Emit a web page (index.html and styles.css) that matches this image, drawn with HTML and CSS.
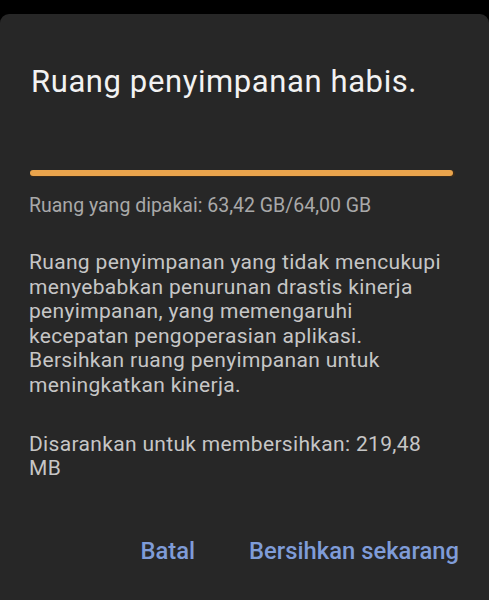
FILE: index.html
```html
<!DOCTYPE html>
<html lang="id">
<head>
<meta charset="utf-8">
<link rel="stylesheet" href="styles.css">
</head>
<body>
<div class="dialog">
  <h1 class="title">Ruang penyimpanan habis.</h1>
  <div class="bar"><div class="fill" style="width: 99.5%"></div></div>
  <p class="usage">Ruang yang dipakai: 63,42 GB/64,00 GB</p>
  <p class="desc">Ruang penyimpanan yang tidak mencukupi menyebabkan penurunan drastis kinerja penyimpanan, yang memengaruhi kecepatan pengoperasian aplikasi. Bersihkan ruang penyimpanan untuk meningkatkan kinerja.</p>
  <p class="desc suggest">Disarankan untuk membersihkan: 219,48 MB</p>
  <div class="actions">
    <span class="btn">Batal</span>
    <span class="btn">Bersihkan sekarang</span>
  </div>
</div>
</body>
</html>
```
FILE: styles.css
```css
html, body {
  margin: 0;
  padding: 0;
  background: #000;
  height: 600px;
  overflow: hidden;
}
.dialog {
  margin-top: 14px;
  background: #272727;
  border-radius: 9px 9px 0 0;
  padding: 50px 31px 0 29px;
  height: 600px;
  box-sizing: border-box;
  font-family: Roboto, "Noto Sans", sans-serif;
}
.title {
  margin: 0 0 0 2px;
  font-size: 31px;
  letter-spacing: 0.6px;
  font-weight: 400;
  line-height: 36px;
  color: #f2f2f2;
}
.bar {
  margin: 70px 3px 0 1px;
  height: 7px;
  border-radius: 3.5px;
  background: #3a2b1b;
}
.fill {
  height: 5.5px;
  border-radius: 3px;
  background: #eaa44c;
}
.usage {
  margin: 17px 0 0;
  font-size: 19.5px;
  line-height: 24px;
  color: #a9a9a9;
}
.desc {
  margin: 32px 0 0;
  font-size: 21px;
  letter-spacing: 0.33px;
  line-height: 24.6px;
  color: #c6c6c6;
}
.suggest {
  margin-top: 34px;
}
.actions {
  display: flex;
  justify-content: flex-end;
  gap: 54px;
  margin-top: 56px;
  margin-right: -1px;
}
.btn {
  font-size: 23.8px;
  line-height: 28px;
  font-weight: 500;
  color: #7f9cd8;
}
```
